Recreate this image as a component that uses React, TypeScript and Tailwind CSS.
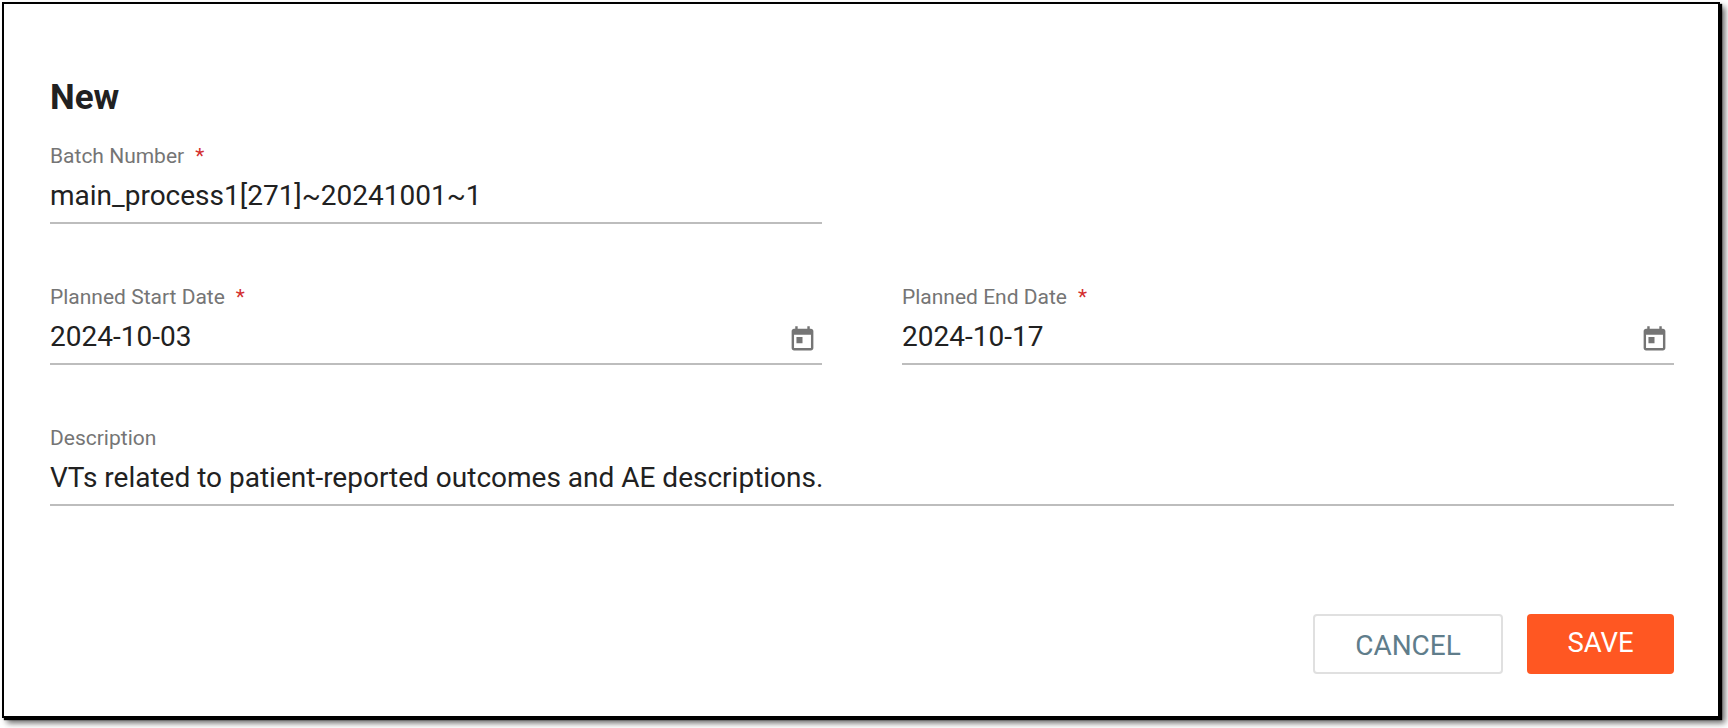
import React from 'react';

const CalendarIcon = () => (
  <svg viewBox="0 0 24 24" className="mt-1 h-[29px] w-[29px] shrink-0 fill-[#757575]">
    <path d="M19 3h-1V1h-2v2H8V1H6v2H5c-1.11 0-1.99.9-1.99 2L3 19c0 1.1.89 2 2 2h14c1.1 0 2-.9 2-2V5c0-1.1-.9-2-2-2zm0 16H5V8h14v11zM7 10h5v5H7z" />
  </svg>
);

interface FieldProps {
  label: string;
  value: string;
  required?: boolean;
  date?: boolean;
}

const Field = ({ label, value, required, date }: FieldProps) => (
  <div className="w-[772px]">
    <div className="h-[26px] text-[21px] leading-[24px] text-[#757575]">
      {label}
      {required && <span className="ml-[11px] text-[#d32f2f]">*</span>}
    </div>
    <div className="flex h-[54px] items-center justify-between border-b-2 border-[#bdbdbd] pr-[5px] text-[28px] text-[#212121]">
      <span>{value}</span>
      {date && <CalendarIcon />}
    </div>
  </div>
);

export default function App() {
  return (
    <div className="h-[728px] w-[1728px] overflow-hidden bg-white p-[2px] font-['Roboto',sans-serif]">
      <div className="flex h-[716px] w-[1718px] flex-col border-2 border-black bg-white pt-[74px] pr-[44px] pl-[46px] shadow-[2px_2px_1px_#000,5px_5px_6px_rgba(0,0,0,0.6)]">
        <h1 className="h-10 text-[35px] leading-10 font-bold text-[#212121]">New</h1>

        <div className="mt-[26px]">
          <Field label="Batch Number" value="main_process1[271]~20241001~1" required />
        </div>

        <div className="mt-[61px] flex justify-between">
          <Field label="Planned Start Date" value="2024-10-03" required date />
          <Field label="Planned End Date" value="2024-10-17" required date />
        </div>

        <div className="mt-[61px] [&>div]:w-full">
          <Field label="Description" value="VTs related to patient-reported outcomes and AE descriptions." />
        </div>

        <div className="mt-[108px] flex justify-end gap-6">
          <button className="h-[60px] w-[190px] rounded border-2 border-[#e0e0e0] bg-white pt-1 text-[28px] text-[#607d8b]">
            CANCEL
          </button>
          <button className="h-[60px] w-[147px] rounded bg-[#ff5722] pb-[2px] text-[27.5px] text-white">
            SAVE
          </button>
        </div>
      </div>
    </div>
  );
}
